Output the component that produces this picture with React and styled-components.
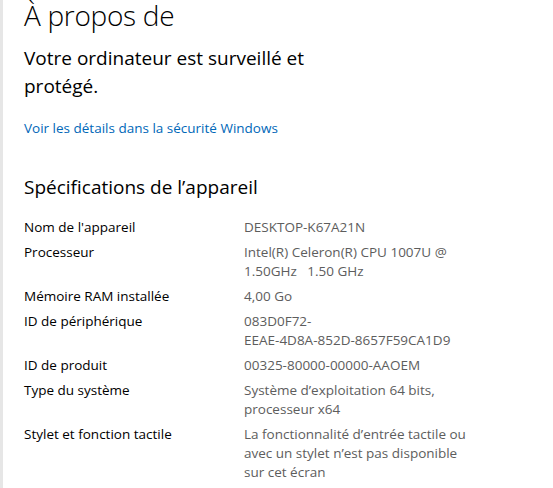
import styled, { createGlobalStyle } from 'styled-components';

const GlobalStyle = createGlobalStyle`
  html, body {
    margin: 0;
    padding: 0;
    background: #ffffff;
  }
  body {
    font-family: "Open Sans", "Noto Sans", "Liberation Sans", sans-serif;
    color: #000000;
  }
`;

const specs = [
  { label: "Nom de l'appareil", value: ['DESKTOP-K67A21N'] },
  { label: 'Processeur', value: ['Intel(R) Celeron(R) CPU 1007U @', '1.50GHz\u00a0\u00a0 1.50 GHz'] },
  { label: 'Mémoire RAM installée', value: ['4,00 Go'] },
  { label: 'ID de périphérique', value: ['083D0F72-', 'EEAE-4D8A-852D-8657F59CA1D9'] },
  { label: 'ID de produit', value: ['00325-80000-00000-AAOEM'] },
  { label: 'Type du système', value: ['Système d’exploitation 64 bits,', 'processeur x64'] },
  {
    label: 'Stylet et fonction tactile',
    value: ['La fonctionnalité d’entrée tactile ou', 'avec un stylet n’est pas disponible', 'sur cet écran'],
  },
];

function App() {
  return (
    <>
      <GlobalStyle />
      <Page>
        <Title>À propos de</Title>
        <Status>
          Votre ordinateur est surveillé et
          <br />
          protégé.
        </Status>
        <Link href="#">Voir les détails dans la sécurité Windows</Link>
        <SectionTitle>Spécifications de l’appareil</SectionTitle>
        <SpecList>
          {specs.map((s) => (
            <SpecRow key={s.label}>
              <Label>{s.label}</Label>
              <Value>
                {s.value.map((line) => (
                  <div key={line}>{line}</div>
                ))}
              </Value>
            </SpecRow>
          ))}
        </SpecList>
      </Page>
    </>
  );
}

export default App;

const Page = styled.div`
  width: 553px;
  height: 488px;
  box-sizing: border-box;
  overflow: hidden;
  border-left: 3px solid #e6e6e6;
  padding-left: 21px;
  display: flex;
  flex-direction: column;
`;

const Title = styled.h1`
  margin: 0;
  font-size: 28px;
  font-weight: 300;
  line-height: 30px;
  letter-spacing: -0.3px;
`;

const Status = styled.p`
  margin: 14px 0 0;
  font-size: 19px;
  font-weight: 400;
  line-height: 28px;
`;

const Link = styled.a`
  margin-top: 19px;
  font-size: 13.5px;
  line-height: 19px;
  color: #0067b8;
  text-decoration: none;
  align-self: flex-start;
`;

const SectionTitle = styled.h2`
  margin: 35px 0 0;
  font-size: 19px;
  font-weight: 400;
  line-height: 28px;
`;

const SpecList = styled.div`
  margin-top: 17px;
  display: flex;
  flex-direction: column;
  gap: 6px;
`;

const SpecRow = styled.div`
  display: grid;
  grid-template-columns: 220px 1fr;
  font-size: 13.5px;
  line-height: 19px;
`;

const Label = styled.div`
  color: #000000;
`;

const Value = styled.div`
  color: #5d5d5d;
`;
